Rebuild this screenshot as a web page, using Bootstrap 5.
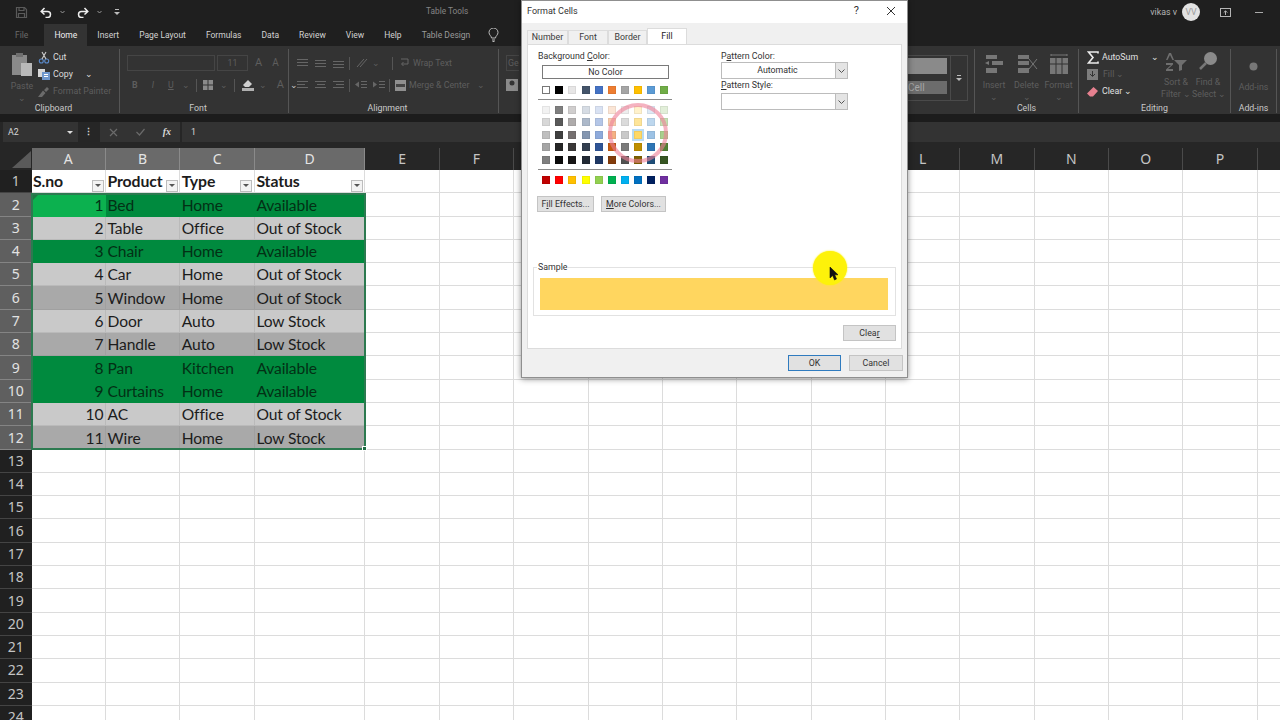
<!DOCTYPE html>
<html lang="en">
<head>
    <meta charset="UTF-8">
    <meta name="viewport" content="width=device-width, initial-scale=1.0">
    <title>Format Cells</title>
    <link rel="stylesheet" href="https://cdn.jsdelivr.net/npm/bootstrap@5.3.3/dist/css/bootstrap.min.css">
    <style>
        html, body { height: 720px; overflow: hidden; background: #262626; }
        body { font-family: "Roboto", "Noto Sans", sans-serif; font-size: 8.8px; color: #d8d8d8; line-height: 1.2; position: relative; }
        svg { display: block; flex: none; }

        /* window chrome */
        .title-bar { height: 24px; background: #1f1f1f; padding-left: 15px; }
        .title-tools { margin-left: 298px; color: #858585; font-size: 8.3px; }
        .user-name { margin-right: 5px; color: #b5b5b5; }
        .avatar { width: 18px; height: 18px; border-radius: 50%; background: #e2e2e2; color: #9a9a9a; }
        .tab-bar { height: 22px; background: #1f1f1f; }
        .tab-item { padding: 0 10px; height: 22px; display: flex; align-items: center; color: #d2d2d2; white-space: nowrap; font-size: 8.5px; }
        .tab-item.is-home { background: #333; color: #efefef; width: 43px; justify-content: center; padding: 0; }
        .tab-item.is-dim { color: #6a6a6a; }
        .tab-item.is-grey { color: #9a9a9a; }

        /* ribbon */
        .ribbon { height: 68px; background: #333; }
        .rib-group { position: relative; height: 64px; margin-top: 3px; border-right: 1px solid #555; flex: none; }
        .rib-label { position: absolute; left: 0; right: 12px; bottom: -1px; text-align: center; color: #c9c9c9; }
        .dim { color: #5e5e5e; }
        .rib-small { height: 17px; display: flex; align-items: center; gap: 3px; white-space: nowrap; }
        .rib-tall { text-align: center; color: #5e5e5e; line-height: 12px; }
        .font-box { height: 16px; border: 1px solid #454545; }
        .split { width: 1px; height: 13px; background: #555; flex: none; }

        .gap-band { height: 8px; background: #1c1c1c; }
        .formula-bar { height: 20px; background: #262626; }
        .name-box { width: 75px; margin-left: 3px; background: #333; padding: 0 5px; }
        .fx-box { width: 80px; margin-left: 4px; background: #333; padding: 0 9px; color: #6a6a6a; }
        .value-box { flex: 1; margin-left: 2px; background: #333; padding: 0 9px; }
        .dots { width: 15px; margin-left: 3px; text-align: center; font-weight: 700; }
        .formula-gap { height: 6px; background: #262626; }

        /* sheet */
        .sheet-wrap { position: relative; height: 572px; overflow: hidden; background: #fff; }
        .sheet-grid {
            display: grid;
            grid-template-columns: 31.5px 74.5px 74.3px 74.6px 110.6px repeat(13, 74.35px);
            grid-template-rows: 22px;
            grid-auto-rows: 23.3px;
            font-family: "Lato", "Liberation Sans", sans-serif;
            font-size: 15.6px;
            letter-spacing: -.1px;
            color: #1c1c1c;
        }
        .col-head, .row-head { background: #262626; color: #c4c4c4; display: flex; align-items: center; justify-content: center; font-family: "Noto Sans", sans-serif; font-size: 14px; letter-spacing: 0; border-right: 1px solid #4a4a4a; padding-top: 1px; }
        .row-head { background: #202020; border-right: 0; border-bottom: 1px solid #444; }
        .col-head.on { background: #6a6a6a; color: #e4e4e4; border-right-color: #8a8a8a; }
        .row-head.on { background: #5f5f5f; color: #e2e2e2; border-bottom-color: #848484; }
        .corner { background: #262626; border-right: 0; justify-content: flex-end; align-items: flex-end; padding: 0 1px 2px 0; }
        .cell { border-right: 1px solid #dcdcdc; border-bottom: 1px solid #dcdcdc; padding: 1px 1.5px 0; display: flex; align-items: center; white-space: nowrap; background: #fff; overflow: hidden; }
        .cell.num { justify-content: flex-end; }
        .cell.is-head { font-weight: 700; justify-content: space-between; font-size: 15.8px; }
        .cell.is-green { background: #008a3e; border-color: #008a3e; color: #033015; }
        .cell.is-active { background: #0cb14f; border-color: #0cb14f; color: #033015; }
        .cell.is-light { background: #c9c9c9; border-color: #bababa; }
        .cell.is-mid { background: #a9a9a9; border-color: #a0a0a0; }
        .filter-btn { width: 12px; height: 12px; margin-top: 8px; background: #f3f3f3; border: 1px solid #bdbdbd; flex: none; display: flex; align-items: center; justify-content: center; }
        .selection { position: absolute; left: 31px; top: 45px; width: 335px; height: 257px; border: 2px solid #2c7a50; pointer-events: none; }
        .selection::after { content: ""; position: absolute; right: -3px; bottom: -3px; width: 5px; height: 5px; background: #1e6b42; border: 1px solid #fff; }
        .selection::before { content: ""; position: absolute; left: 0; top: 0; border-top: 5px solid #1f7a45; border-right: 5px solid transparent; }

        /* dialog */
        .fmt-dialog { position: absolute; left: 521px; top: 0; width: 387px; height: 378px; background: #f0f0f0; border: 1px solid #8f8f8f; box-shadow: 0 1px 6px rgba(0,0,0,.45); color: #333; }
        .dlg-title { height: 22px; background: #fff; padding: 0 11px 2px 5px; font-size: 9px; }
        .help-mark { font-size: 11px; margin-right: 27px; }
        .dlg-tabs { margin: 0 0 0 5px; height: 21px; border: 0; align-items: flex-end; flex-wrap: nowrap; }
        .dlg-tabs .nav-link { height: 14px; padding: 0; text-align: center; color: #3a3a3a; background: #f0f0f0; border: 1px solid #dcdcdc; border-bottom: 0; border-radius: 0; line-height: 13px; margin: 0; }
        .dlg-tabs .nav-link.active { height: 16px; background: #fff; color: #222; border-color: #dcdcdc; line-height: 15px; }
        .dlg-panel { margin: 0 5px; height: 305px; background: #fff; border: 1px solid #dcdcdc; flex: none; position: relative; }
        .top-row { height: 222px; flex: none; }
        .bg-col { width: 193px; padding: 6px 0 0 10px; flex: none; }
        .pat-col { padding-top: 6px; }
        .field-label { height: 12px; line-height: 11px; }
        .no-color { width: 127px; height: 14px; margin: 2px 0 0 4px; border: 1px solid #7a7a7a; background: #fff; line-height: 12px; text-align: center; }
        .swatch-row { display: flex; gap: 5.1px; margin: 6.5px 0 0 4.3px; }
        .swatch-row.tight { margin-top: 4.4px; }
        .swatch { width: 8px; height: 8px; border: 1px solid rgba(0,0,0,.06); }
        .swatch.hi { outline: 2.5px solid #b9dcf3; }
        .swatch.white { border-color: #777; }
        .rule { width: 134px; height: 1px; background: #8a8a8a; margin: 5px 0 0; opacity: 1; border: 0; }
        .win-btn { --bs-btn-padding-y: 0; --bs-btn-padding-x: 0; --bs-btn-font-size: 8.8px; --bs-btn-border-radius: 0; --bs-btn-line-height: 14px; --bs-btn-bg: #e1e1e1; --bs-btn-border-color: #c4c4c4; --bs-btn-color: #333; height: 16px; }
        .combo { width: 127px; height: 17px; background: #fff; border: 1px solid #bcbcbc; text-align: center; line-height: 15px; position: relative; padding-right: 14px; }
        .combo-arrow { position: absolute; right: 0; top: 0; bottom: 0; width: 12px; background: #e4e4e4; border-left: 1px solid #bcbcbc; display: flex; align-items: center; justify-content: center; }
        .sample-box { margin-left: 5px; width: 363px; height: 49px; border: 1px solid #e2e2e2; position: relative; flex: none; }
        .sample-title { position: absolute; left: 3px; top: -6px; background: #fff; padding: 0 1px; line-height: 11px; }
        .sample-fill { margin: 10px 7px 0 6px; height: 32px; background: #ffd65f; }
        .clear-btn { width: 53px; margin: 9px 5px 0 auto; }
        .dlg-foot { padding: 6px 4px 0 0; gap: 8px; }
        .ok-btn { width: 53px; --bs-btn-border-color: #2f7bbf; border-width: 1.5px; }
        .cancel-btn { width: 54px; }
        .pink-ring { position: absolute; left: 79px; top: 57px; }
        .pointer-spot { position: absolute; left: 813px; top: 251px; width: 34px; height: 34px; border-radius: 50%; background: #fdf20a; box-shadow: 0 0 2px #fdf20a; }
        .pointer-arrow { position: absolute; left: 829px; top: 266px; }
    </style>
</head>
<body>
    <div class="title-bar d-flex align-items-center gap-2">
        <svg width="13" height="13" viewBox="0 0 13 13" fill="none" stroke="#5a5a5a" stroke-width="1.2"><path d="M1.500 1.500h8l2 2v8h-10z"/><path d="M4 1.500v3h5v-3M3.500 11.500v-4h6v4"/></svg>
        <svg class="ms-1" width="12" height="11" viewBox="0 0 12 11" fill="none" stroke="#eee" stroke-width="1.5"><path d="M1.500 4.500h6a3 3 0 0 1 0 6h-2M4.500 1l-3.300 3.500 3.300 3"/></svg>
        <svg width="5" height="4" viewBox="0 0 5 4" fill="none" stroke="#999"><path d="M.5 1l2 2 2-2"/></svg>
        <svg class="ms-1" width="12" height="11" viewBox="0 0 12 11" fill="none" stroke="#eee" stroke-width="1.5"><path d="M10.500 4.500h-6a3 3 0 0 0 0 6h2M7.500 1l3.300 3.500-3.300 3"/></svg>
        <svg width="5" height="4" viewBox="0 0 5 4" fill="none" stroke="#999"><path d="M.5 1l2 2 2-2"/></svg>
        <svg class="ms-1" width="6" height="6" viewBox="0 0 6 6" fill="#bbb"><rect x="1" y="0" width="4" height="1"/><path d="M0 3h6l-3 3z"/></svg>
        <span class="title-tools">Table Tools</span>
        <div class="ms-auto d-flex align-items-center">
            <span class="user-name">vikas v</span>
            <span class="avatar d-flex align-items-center justify-content-center">VV</span>
            <svg style="margin-left:20px" width="11" height="9" viewBox="0 0 11 9" fill="none" stroke="#b5b5b5"><rect x=".5" y=".5" width="10" height="8"/><path d="M5.500 7V3M3.700 4.600l1.800-1.800 1.800 1.800"/></svg>
            <svg style="margin:0 17px 0 24px" width="8" height="1" viewBox="0 0 8 1"><rect width="8" height="1" fill="#aaa"/></svg>
        </div>
    </div>

    <div class="tab-bar d-flex align-items-center">
        <span class="tab-item is-dim" style="padding:0 16px 0 15px">File</span>
        <span class="tab-item is-home">Home</span>
        <span class="tab-item">Insert</span>
        <span class="tab-item">Page Layout</span>
        <span class="tab-item">Formulas</span>
        <span class="tab-item">Data</span>
        <span class="tab-item">Review</span>
        <span class="tab-item">View</span>
        <span class="tab-item">Help</span>
        <span class="tab-item is-grey">Table Design</span>
        <svg class="ms-2" width="11" height="14" viewBox="0 0 11 14" fill="none" stroke="#bbb"><path d="M3.500 10c0-2-2.500-3-2.500-5.500a4.500 4.500 0 0 1 9 0C10 7 7.500 8 7.500 10zM4 12h3M4.500 13.500h2"/></svg>
    </div>

    <div class="ribbon d-flex">
        <!-- Clipboard -->
        <div class="rib-group d-flex" style="width:120px;padding-left:11px">
            <div style="width:27px" class="rib-tall">
                <svg style="margin-top:3px" width="22" height="25" viewBox="0 0 22 25"><rect x="1" y="3" width="15" height="20" fill="#8a8a8a"/><rect x="5" y="1" width="7" height="4" fill="#6f6f6f"/><rect x="10" y="11" width="11" height="13" fill="#b9b9b9"/></svg>
                <div style="margin-top:3px;margin-left:-5px">Paste</div>
                <div style="margin-left:-5px">⌄</div>
            </div>
            <div>
                <div class="rib-small" style="color:#dcdcdc"><svg width="12" height="13" viewBox="0 0 11 13" fill="none" stroke="#5b8ac9" stroke-width="1.1"><circle cx="2.800" cy="10" r="2"/><circle cx="8.200" cy="10" r="2"/><path d="M3.500 8L7.500 1M7.500 8L3.500 1" stroke="#ccc"/></svg>Cut</div>
                <div class="rib-small" style="color:#dcdcdc"><svg width="12" height="11" viewBox="0 0 12 11"><rect x="0" y="0" width="7" height="8" fill="#d8d8d8"/><rect x="4" y="3" width="8" height="8" fill="#6f97cc"/><rect x="6" y="5" width="4" height="1" fill="#fff"/><rect x="6" y="7" width="4" height="1" fill="#fff"/></svg>Copy<span style="margin-left:9px">⌄</span></div>
                <div class="rib-small dim"><svg width="12" height="11" viewBox="0 0 12 11" fill="#6a6a6a"><path d="M6 4l3-3 2 2-3 3zM5 4.500l2.500 2.500L4 11H0z"/></svg>Format Painter</div>
            </div>
            <span class="rib-label">Clipboard</span>
        </div>
        <!-- Font -->
        <div class="rib-group" style="width:169px;padding:6px 0 0 7px">
            <div class="d-flex align-items-center">
                <div class="font-box" style="width:88px"></div>
                <div class="font-box dim text-center" style="width:31px;margin-left:2px;line-height:14px">11</div>
                <span class="dim" style="margin-left:7px;font-size:11px">A</span><span class="dim" style="margin-left:10px;font-size:10px">A</span>
            </div>
            <div class="d-flex align-items-center dim" style="margin-top:6px;height:16px">
                <b style="margin-left:5px">B</b><i style="margin-left:14px">I</i><u style="margin-left:14px">U</u><span style="margin:0 6px 0 8px">⌄</span><span class="split"></span>
                <svg style="margin-left:6px" width="10" height="10" viewBox="0 0 10 10"><path fill="#8a8a8a" d="M0 0h4.500v4.500H0zM5.500 0H10v4.500H5.500zM0 5.500h4.500V10H0zM5.500 5.500H10V10H5.500z"/></svg><span style="margin:0 6px 0 7px">⌄</span><span class="split"></span>
                <svg style="margin-left:7px" width="12" height="11" viewBox="0 0 12 11"><path fill="#d0d0d0" d="M6 0l4 4-3 3H3L1 5z"/><rect y="8" width="12" height="3" fill="#b0b0b0"/></svg><span style="margin-left:5px">⌄</span>
                <span style="margin-left:10px;font-size:11px">A</span><span style="margin-left:6px;color:#c9c9c9">⌄</span>
            </div>
            <span class="rib-label">Font</span>
        </div>
        <!-- Alignment -->
        <div class="rib-group" style="width:210px;padding:6px 0 0 8px">
            <div class="d-flex align-items-center dim text-nowrap" style="height:16px">
                <svg width="11" height="9" viewBox="0 0 11 9" fill="#666"><path d="M0 0h11v1H0zM0 3h11v1H0zM0 6h11v1H0z"/></svg>
                <svg style="margin-left:7px" width="11" height="9" viewBox="0 0 11 9" fill="#666"><path d="M0 1h11v1H0zM0 4h11v1H0zM0 7h11v1H0z"/></svg>
                <svg style="margin-left:7px" width="11" height="9" viewBox="0 0 11 9" fill="#666"><path d="M0 2h11v1H0zM0 5h11v1H0zM0 8h11v1H0z"/></svg>
                <span class="split" style="margin-left:5px"></span>
                <svg style="margin-left:6px" width="14" height="10" viewBox="0 0 14 10" fill="none" stroke="#666"><path d="M1 9L8 1M4 9l7-8"/></svg>
                <span style="margin-left:2px">⌄</span>
                <span class="split" style="margin-left:12px"></span>
                <svg style="margin-left:7px" width="9" height="11" viewBox="0 0 9 11" fill="none" stroke="#666"><path d="M1 1h7v5H2M3.500 4l-2 2 2 2"/></svg>
                <span style="margin-left:4px">Wrap Text</span>
            </div>
            <div class="d-flex align-items-center dim text-nowrap" style="margin-top:6px;height:16px">
                <svg width="11" height="9" viewBox="0 0 11 9" fill="#666"><path d="M0 0h11v1H0zM0 3h8v1H0zM0 6h11v1H0z"/></svg>
                <svg style="margin-left:7px" width="11" height="9" viewBox="0 0 11 9" fill="#666"><path d="M0 0h11v1H0zM2 3h8v1H2zM0 6h11v1H0z"/></svg>
                <svg style="margin-left:7px" width="11" height="9" viewBox="0 0 11 9" fill="#666"><path d="M0 0h11v1H0zM3 3h8v1H3zM0 6h11v1H0z"/></svg>
                <span class="split" style="margin-left:5px"></span>
                <svg style="margin-left:5px" width="12" height="9" viewBox="0 0 12 9" fill="#666"><path d="M6 0h6v1H6zM6 3h6v1H6zM6 6h6v1H6zM0 3.500l4-3v6z"/></svg>
                <svg style="margin-left:6px" width="12" height="9" viewBox="0 0 12 9" fill="#666"><path d="M6 0h6v1H6zM6 3h6v1H6zM6 6h6v1H6zM4 3.500l-4-3v6z"/></svg>
                <span class="split" style="margin-left:4px"></span>
                <svg style="margin-left:5px" width="11" height="11" viewBox="0 0 11 11"><rect width="11" height="11" fill="#8f8f8f"/><rect x="1" y="4" width="9" height="3" fill="#444"/></svg>
                <span style="margin-left:3px">Merge &amp; Center</span><span class="ms-2">⌄</span>
            </div>
            <span class="rib-label">Alignment</span>
        </div>
        <!-- Number and Styles, mostly behind the dialog -->
        <div class="rib-group d-flex justify-content-between" style="width:476px;padding:6px 6px 0 7px">
            <div class="dim">
                <div style="height:16px;border:1px solid #454545;border-right:0;line-height:14px;padding-left:1px">Ge</div>
                <svg style="margin-top:8px" width="12" height="12" viewBox="0 0 12 12"><rect width="12" height="12" fill="#8a8a8a"/><circle cx="6" cy="4" r="2.500" fill="#333"/></svg>
            </div>
            <div class="d-flex" style="height:46px;border:1px solid #4a4a4a;border-left:0">
                <div class="d-flex flex-column justify-content-between" style="width:42px;padding:2px 3px 6px 0">
                    <div style="height:16px;background:#8a8a8a"></div>
                    <div style="height:13px;background:#6c6c6c;color:#a5a5a5;line-height:13px;font-size:10px">Cell</div>
                </div>
                <div class="d-flex align-items-center justify-content-center" style="width:17px;border-left:1px solid #4a4a4a">
                    <svg width="6" height="6" viewBox="0 0 6 6" fill="#bbb"><rect x="1" width="4" height="1"/><path d="M0 3h6l-3 3z"/></svg>
                </div>
            </div>
        </div>
        <!-- Cells -->
        <div class="rib-group" style="width:104px">
            <div class="d-flex dim text-center" style="padding:5px 0 0 3px;line-height:12px">
                <div style="width:32px">
                    <svg class="mx-auto" width="20" height="20" viewBox="0 0 20 20" fill="#777"><path d="M2 1h11v4H2zM2 14h11v5H2zM8 7h11v4H8zM1 9l4-2v4z"/></svg>
                    <div style="margin-top:5px">Insert</div><div>⌄</div>
                </div>
                <div style="width:33px">
                    <svg class="mx-auto" width="22" height="20" viewBox="0 0 22 20" fill="#777"><path d="M2 1h11v4H2zM2 14h11v5H2zM2 7h11v4H2z"/><path d="M13 5l8 10M21 5l-8 10" stroke="#777" fill="none"/></svg>
                    <div style="margin-top:5px">Delete</div><div>⌄</div>
                </div>
                <div style="width:31px">
                    <svg class="mx-auto" width="20" height="20" viewBox="0 0 20 20" fill="#777"><path d="M2 1h16M2 0v2M18 0v2" stroke="#777" fill="none"/><path d="M1 4h18v16H1z"/><path d="M7 4v16M13 4v16M1 10h18" stroke="#333"/></svg>
                    <div style="margin-top:5px">Format</div><div>⌄</div>
                </div>
            </div>
            <span class="rib-label" style="right:0">Cells</span>
        </div>
        <!-- Editing -->
        <div class="rib-group d-flex" style="width:152px;padding-left:8px">
            <div style="width:76px">
                <div class="rib-small" style="color:#e0e0e0"><svg width="12" height="13" viewBox="0 0 12 13" fill="none" stroke="#ececec" stroke-width="1.600"><path d="M11 2.500V1H1.500L6 6.500 1.500 12H11v-1.500"/></svg>AutoSum<span style="margin-left:10px">⌄</span></div>
                <div class="rib-small dim"><svg width="11" height="11" viewBox="0 0 11 11"><rect width="11" height="11" fill="#7d7d7d"/><path d="M5.500 2v5M3 5l2.500 2.500L8 5" stroke="#333" fill="none"/></svg><span style="margin-left:2px">Fill ⌄</span></div>
                <div class="rib-small" style="color:#e0e0e0"><svg width="11" height="10" viewBox="0 0 11 10"><path fill="#e6808f" d="M6.500 0L11 4 6 9.500H3L0 6.500z"/></svg><span style="margin-left:1px">Clear ⌄</span></div>
            </div>
            <div class="rib-tall" style="width:32px;margin-left:-3px;padding-top:4px">
                <svg class="mx-auto" width="22" height="18" viewBox="0 0 22 18" fill="#6f6f6f"><path d="M9 7h13l-5 5v5l-3 1v-6z"/><path d="M4 0h2l3 7H7.500L5 2 2.500 7H1zM1 10h7v1.500L3 16h5v2H1v-1.500L6 12H1z"/></svg>
                <div style="margin-top:5px">Sort &amp;</div><div class="text-nowrap">Filter ⌄</div>
            </div>
            <div class="rib-tall" style="width:32px;padding-top:2px">
                <svg class="mx-auto" width="20" height="20" viewBox="0 0 20 20"><circle cx="12.500" cy="7.500" r="6.500" fill="#8a8a8a"/><path d="M8 12l-6 6" stroke="#777" stroke-width="2.500"/></svg>
                <div style="margin-top:5px">Find &amp;</div><div class="text-nowrap">Select ⌄</div>
            </div>
            <span class="rib-label" style="right:0">Editing</span>
        </div>
        <!-- Add-ins -->
        <div class="rib-group" style="width:46px;padding-top:13px">
            <svg class="mx-auto" width="9" height="9" viewBox="0 0 9 9"><circle cx="4.500" cy="4.500" r="4" fill="#777"/></svg>
            <div class="dim text-center" style="margin-top:11px">Add-ins</div>
            <span class="rib-label" style="right:0">Add-ins</span>
        </div>
    </div>

    <div class="gap-band"></div>
    <div class="formula-bar d-flex">
        <div class="name-box d-flex align-items-center justify-content-between">A2<svg width="6" height="3" viewBox="0 0 6 3"><path d="M0 0h6L3 3z" fill="#ddd"/></svg></div>
        <div class="dots d-flex align-items-center justify-content-center">⋮</div>
        <div class="fx-box d-flex align-items-center justify-content-between">
            <svg width="9" height="9" viewBox="0 0 9 9" fill="none" stroke="#6a6a6a" stroke-width="1.200"><path d="M1 1l7 7M8 1L1 8"/></svg>
            <svg width="9" height="8" viewBox="0 0 9 8" fill="none" stroke="#6a6a6a" stroke-width="1.200"><path d="M.5 4l3 3 5-6"/></svg>
            <i style="font-family:'Liberation Serif',serif;color:#d8d8d8;font-size:10px;font-weight:700">fx</i>
        </div>
        <div class="value-box d-flex align-items-center">1</div>
    </div>
    <div class="formula-gap"></div>

    <div class="sheet-wrap">
        <div class="sheet-grid" id="sheetGrid"></div>
        <div class="selection"></div>
    </div>

    <div class="fmt-dialog d-flex flex-column">
        <div class="dlg-title d-flex align-items-center">
            <span>Format Cells</span>
            <span class="help-mark ms-auto">?</span>
            <svg width="10" height="10" viewBox="0 0 10 10" fill="none" stroke="#333"><path d="M1 1l8 8M9 1L1 9"/></svg>
        </div>
        <ul class="nav nav-tabs dlg-tabs">
            <li class="nav-item"><a class="nav-link" style="width:41px" href="#">Number</a></li>
            <li class="nav-item"><a class="nav-link" style="width:40px" href="#">Font</a></li>
            <li class="nav-item"><a class="nav-link" style="width:39px" href="#">Border</a></li>
            <li class="nav-item"><a class="nav-link active" style="width:40px" href="#">Fill</a></li>
        </ul>
        <div class="dlg-panel d-flex flex-column">
            <div class="top-row d-flex">
                <div class="bg-col">
                    <div class="field-label">Background <u>C</u>olor:</div>
                    <div class="no-color">No Color</div>
                    <div id="swatchesTheme"></div>
                    <hr class="rule">
                    <div id="swatchesTint"></div>
                    <hr class="rule">
                    <div id="swatchesStd"></div>
                    <div class="d-flex" style="gap:7px;margin:12px 0 0 -1px">
                        <button type="button" class="btn win-btn" style="width:57px">F<u>i</u>ll Effects...</button>
                        <button type="button" class="btn win-btn" style="width:65px"><u>M</u>ore Colors...</button>
                    </div>
                </div>
                <div class="pat-col">
                    <div class="field-label">P<u>a</u>ttern Color:</div>
                    <div class="combo" style="margin-top:-1px">Automatic<span class="combo-arrow"><svg width="7" height="4" viewBox="0 0 7 4" fill="none" stroke="#555"><path d="M.5.500l3 3 3-3"/></svg></span></div>
                    <div class="field-label" style="margin-top:1px"><u>P</u>attern Style:</div>
                    <div class="combo" style="margin-top:1px"><span class="combo-arrow"><svg width="7" height="4" viewBox="0 0 7 4" fill="none" stroke="#555"><path d="M.5.500l3 3 3-3"/></svg></span></div>
                </div>
            </div>
            <div class="sample-box">
                <span class="sample-title">Sample</span>
                <div class="sample-fill"></div>
            </div>
            <button type="button" class="btn win-btn clear-btn">Clea<u>r</u></button>
            <svg class="pink-ring" width="62" height="62" viewBox="0 0 62 62" fill="none"><circle cx="31" cy="31" r="28" stroke="#ef7f96" stroke-opacity=".6" stroke-width="4"/></svg>
        </div>
        <div class="dlg-foot d-flex justify-content-end">
            <button type="button" class="btn win-btn ok-btn">OK</button>
            <button type="button" class="btn win-btn cancel-btn">Cancel</button>
        </div>
    </div>

    <div class="pointer-spot"></div>
    <svg class="pointer-arrow" width="10" height="15" viewBox="0 0 10 15"><path d="M1 1v11l2.700-2.500L5.500 14l2-1-1.800-4.200H9z" fill="#111" stroke="#111" stroke-width=".6"/></svg>

    <script src="https://cdn.jsdelivr.net/npm/bootstrap@5.3.3/dist/js/bootstrap.bundle.min.js"></script>
    <script>
        const rows = [
            [1, "Bed", "Home", "Available", "is-green"],
            [2, "Table", "Office", "Out of Stock", "is-light"],
            [3, "Chair", "Home", "Available", "is-green"],
            [4, "Car", "Home", "Out of Stock", "is-light"],
            [5, "Window", "Home", "Out of Stock", "is-mid"],
            [6, "Door", "Auto", "Low Stock", "is-light"],
            [7, "Handle", "Auto", "Low Stock", "is-mid"],
            [8, "Pan", "Kitchen", "Available", "is-green"],
            [9, "Curtains", "Home", "Available", "is-green"],
            [10, "AC", "Office", "Out of Stock", "is-light"],
            [11, "Wire", "Home", "Low Stock", "is-mid"]
        ];
        const filterIcon = '<span class="filter-btn"><svg width="6" height="3" viewBox="0 0 6 3"><path d="M0 0h6L3 3z" fill="#555"/></svg></span>';
        // the 17th column runs off the right edge, its letter is never in view
        const letters = "ABCDEFGHIJKLMNOP".split("").concat("");

        let html = '<div class="col-head corner"><svg width="19" height="17" viewBox="0 0 19 17"><path d="M19 0v17H0z" fill="#5a5a5a"/></svg></div>';
        letters.forEach((l, i) => {
            html += `<div class="col-head ${i < 4 ? "on" : ""}">${l}</div>`;
        });
        for (let r = 1; r <= 24; r++) {
            html += `<div class="row-head ${r >= 2 && r <= 12 ? "on" : ""}">${r}</div>`;
            const data = rows[r - 2];
            letters.forEach((l, i) => {
                if (r === 1 && i < 4) {
                    html += `<div class="cell is-head"><span>${["S.no", "Product", "Type", "Status"][i]}</span>${filterIcon}</div>`;
                } else if (data && i < 4) {
                    const active = r === 2 && i === 0 ? "is-active" : data[4];
                    html += `<div class="cell ${active} ${i === 0 ? "num" : ""}">${data[i]}</div>`;
                } else {
                    html += '<div class="cell"></div>';
                }
            });
        }
        document.getElementById("sheetGrid").innerHTML = html;

        const theme = ["#ffffff", "#000000", "#e7e6e6", "#44546a", "#4472c4", "#ed7d31", "#a5a5a5", "#ffc000", "#5b9bd5", "#70ad47"];
        const tints = [
            ["#f2f2f2", "#7f7f7f", "#d0cece", "#d6dce4", "#d9e2f3", "#fbe5d5", "#ededed", "#fff2cc", "#deeaf6", "#e2efd9"],
            ["#d8d8d8", "#595959", "#aeabab", "#adb9ca", "#b4c6e7", "#f7cbac", "#dbdbdb", "#fee599", "#bdd7ee", "#c5e0b3"],
            ["#bfbfbf", "#3f3f3f", "#757070", "#8496b0", "#8eaadb", "#f4b183", "#c9c9c9", "#ffd965", "#9cc2e5", "#a8d08d"],
            ["#a5a5a5", "#262626", "#3a3838", "#323e4f", "#2f5496", "#c45911", "#7b7b7b", "#bf8f00", "#2e75b5", "#538135"],
            ["#7f7f7f", "#0c0c0c", "#171616", "#222a35", "#1f3864", "#833c0b", "#525252", "#7f6000", "#1e4e79", "#375623"]
        ];
        const standard = ["#c00000", "#ff0000", "#ffc000", "#ffff00", "#92d050", "#00b050", "#00b0f0", "#0070c0", "#002060", "#7030a0"];
        function swatchRow(colors, tight) {
            const cells = colors.map(c => {
                const extra = c === "#ffffff" ? " white" : c === "#ffd965" ? " hi" : "";
                return `<span class="swatch${extra}" style="background:${c}"></span>`;
            }).join("");
            return `<div class="swatch-row ${tight ? "tight" : ""}">${cells}</div>`;
        }
        document.getElementById("swatchesTheme").innerHTML = swatchRow(theme);
        document.getElementById("swatchesTint").innerHTML = tints.map((t, i) => swatchRow(t, i > 0)).join("");
        document.getElementById("swatchesStd").innerHTML = swatchRow(standard);
    </script>
</body>
</html>
